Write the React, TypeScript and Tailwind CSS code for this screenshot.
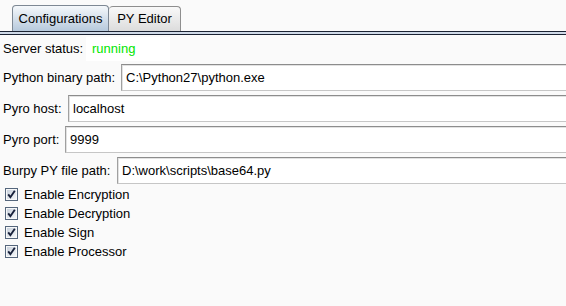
import React from "react";

const font = { fontFamily: '"Liberation Sans", Arial, sans-serif' };

function Tabs() {
  return (
    <div>
      <div className="flex h-[31px] items-end pl-[12px]">
        {/* selected tab */}
        <div className="flex h-[26px] w-[97px] items-center justify-center rounded-t-[4px] border border-b-0 border-[#7d8894] bg-gradient-to-b from-[#f5f8fb] to-[#b6c9dc] text-[13px] text-black">
          Configurations
        </div>
        <div className="flex h-[25px] w-[72px] items-center justify-center rounded-t-[4px] border border-b-0 border-l-0 border-[#8e8e8e] bg-gradient-to-b from-[#f9f9f9] to-[#dcdcdc] text-[13px] text-black">
          PY Editor
        </div>
      </div>
      <div className="h-[4px] border-y border-[#1b2333] bg-[#cfd9e7]" />
    </div>
  );
}

function Field({ label, labelW, value }: { label: string; labelW: number; value: string }) {
  return (
    <div className="flex h-[27px] items-center">
      <span className="shrink-0 text-[13px] text-black" style={{ width: labelW }}>
        {label}
      </span>
      <div className="flex h-full flex-1 items-center border-t border-l border-b border-t-[#8c8c8c] border-l-[#a0a0a0] border-b-[#c6c6c6] bg-white pl-[4px] text-[13px] text-black shadow-[inset_1px_1px_0_#e2e2e2]">
        {value}
      </div>
    </div>
  );
}

function Check({ label }: { label: string }) {
  return (
    <div className="flex h-[19px] items-center pl-[2px]">
      <svg width="13" height="13" viewBox="0 0 13 13" className="shrink-0">
        <defs>
          <linearGradient id="cbg" x1="0" y1="0" x2="1" y2="1">
            <stop offset="0" stopColor="#c9d1dc" />
            <stop offset="1" stopColor="#f4f6f8" />
          </linearGradient>
        </defs>
        <rect x="0.5" y="0.5" width="12" height="12" fill="#f7f8f9" stroke="#55667c" />
        <rect x="2" y="2" width="9" height="9" fill="url(#cbg)" />
        <path d="M3.2 6.4 L5.4 9.2 L9.8 2.8" fill="none" stroke="#17203a" strokeWidth="1.9" />
      </svg>
      <span className="ml-[6px] text-[13px] text-black">{label}</span>
    </div>
  );
}

export default function App() {
  return (
    <div className="h-[306px] w-[566px] overflow-hidden bg-[#fafafa]" style={font}>
      <Tabs />

      <div className="px-[3px]">
        {/* Server status */}
        <div className="mt-[2px] flex h-[24px] items-center">
          <span className="w-[83px] shrink-0 text-[13px] text-black">Server status:</span>
          <div className="flex h-full w-[84px] items-center bg-white pl-[6px] text-[13px] text-[#00e600]">
            running
          </div>
        </div>

        <div className="mt-[3px] mr-[-3px] flex flex-col gap-[4px]">
          <Field label="Python binary path:" labelW={118} value="C:\Python27\python.exe" />
          <Field label="Pyro host:" labelW={65} value="localhost" />
          <Field label="Pyro port:" labelW={62} value="9999" />
          <Field label="Burpy PY file path:" labelW={114} value="D:\work\scripts\base64.py" />
        </div>

        <div className="mt-[1px] flex flex-col">
          <Check label="Enable Encryption" />
          <Check label="Enable Decryption" />
          <Check label="Enable Sign" />
          <Check label="Enable Processor" />
        </div>
      </div>
    </div>
  );
}
